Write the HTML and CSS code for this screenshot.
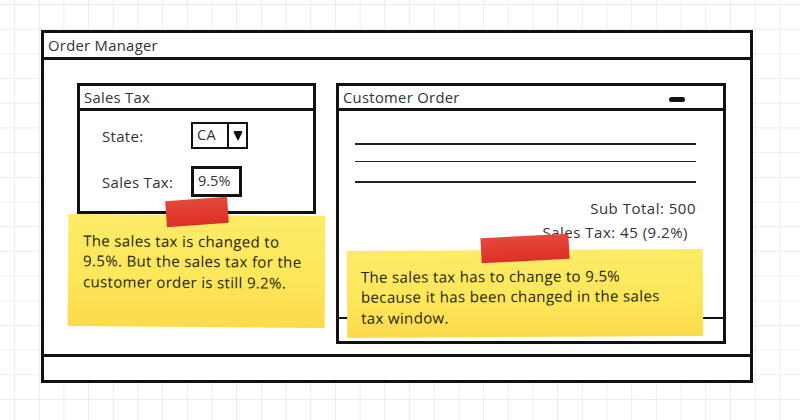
FILE: index.html
```html
<!DOCTYPE html>
<html>
<head>
<meta charset="utf-8">
<link rel="stylesheet" href="styles.css">
</head>
<body>
<div class="canvas">
  <div class="window">
    <div class="win-title">Order Manager</div>
    <div class="win-content">
      <div class="panel sales">
        <div class="panel-head">Sales Tax</div>
        <div class="sales-body">
          <div class="field-label">State:</div>
          <div class="select"><span class="select-val">CA</span><span class="select-btn"><span class="tri"></span></span></div>
          <div class="field-label">Sales Tax:</div>
          <div class="input"><span>9.5%</span></div>
        </div>
      </div>
      <div class="panel order">
        <div class="panel-head"><span>Customer Order</span><span class="minimize"></span></div>
        <div class="order-body">
          <div class="rules">
            <div class="rule"></div>
            <div class="rule r2"></div>
            <div class="rule r3"></div>
          </div>
          <div class="totals">
            <div class="tot">Sub Total: 500</div>
            <div class="tot tax">Sales Tax: 45 (9.2%)</div>
            <div class="tot">Total: 545</div>
          </div>
        </div>
        <div class="order-foot"></div>
      </div>
    </div>
    <div class="win-status"></div>
  </div>

  <div class="sticky note1">The sales tax is changed to 9.5%. But the sales tax for the customer order is still 9.2%.</div>
  <div class="tape tape1"></div>

  <div class="sticky note2">The sales tax has to change to 9.5% because it has been changed in the sales tax window.</div>
  <div class="tape tape2"></div>
</div>
</body>
</html>
```

FILE: styles.css
```css
html, body {
  margin: 0;
  padding: 0;
}
body {
  width: 800px;
  height: 420px;
  overflow: hidden;
  background-color: #ffffff;
  background-image:
    linear-gradient(#ececec 1px, transparent 1px),
    linear-gradient(90deg, #ececec 1px, transparent 1px);
  background-size: 24.7px 24.7px;
  background-position: 14px 4px;
  font-family: "Open Sans", "Liberation Sans", sans-serif;
  color: #333;
  letter-spacing: 0.3px;
}
.canvas {
  position: relative;
  width: 800px;
  height: 420px;
  padding: 30px 0 0 41px;
  box-sizing: border-box;
}
.window {
  width: 712px;
  height: 353px;
  box-sizing: border-box;
  border: 3px solid #111;
  background: #fff;
  display: flex;
  flex-direction: column;
}
.win-title {
  height: 24px;
  border-bottom: 3px solid #111;
  font-size: 14.8px;
  line-height: 24px;
  padding-left: 4px;
  color: #333;
}
.win-content {
  flex: 1;
  display: flex;
  align-items: flex-start;
  gap: 20px;
  padding: 23px 0 0 33px;
}
.win-status {
  height: 23px;
  border-top: 3px solid #111;
}
.panel {
  box-sizing: border-box;
  border: 3px solid #111;
  background: #fff;
  display: flex;
  flex-direction: column;
}
.panel-head {
  height: 22px;
  border-bottom: 3px solid #111;
  font-size: 14.8px;
  line-height: 22px;
  padding-left: 4px;
  display: flex;
  align-items: center;
  justify-content: space-between;
}
.sales {
  width: 239px;
  height: 131px;
}
.sales-body {
  display: grid;
  grid-template-columns: 89px max-content;
  row-gap: 17px;
  align-items: center;
  padding: 11px 0 0 22px;
}
.field-label {
  font-size: 15px;
  color: #333;
}
.select {
  width: 57px;
  height: 27px;
  box-sizing: border-box;
  border: 2.5px solid #111;
  display: flex;
}
.select-val {
  width: 34px;
  font-size: 14.5px;
  line-height: 21px;
  padding-left: 4px;
  box-sizing: border-box;
}
.select-btn {
  flex: 1;
  border-left: 2.5px solid #111;
  display: flex;
  align-items: center;
  justify-content: center;
}
.tri {
  width: 0;
  height: 0;
  border-left: 5.5px solid transparent;
  border-right: 5.5px solid transparent;
  border-top: 10px solid #111;
  border-radius: 2px;
}
.input {
  width: 51px;
  height: 31px;
  box-sizing: border-box;
  border: 3px solid #111;
  font-size: 14.5px;
  line-height: 24px;
  padding-left: 4px;
  letter-spacing: 0;
}
.order {
  width: 390px;
  height: 261px;
}
.minimize {
  width: 16px;
  height: 5px;
  background: #111;
  border-radius: 3px;
  margin: 4px 38px 0 0;
}
.order-body {
  flex: 1;
  display: flex;
  flex-direction: column;
}
.rules {
  padding: 32px 27px 0 16px;
}
.rule {
  height: 1.5px;
  background: #222;
}
.rule.r2 {
  margin-top: 16px;
}
.rule.r3 {
  margin-top: 19px;
}
.totals {
  padding: 13px 27px 0 0;
  text-align: right;
  font-size: 15px;
  line-height: 24.5px;
  color: #333;
  letter-spacing: 0.5px;
}
.tot.tax {
  margin-right: 8px;
}
.order-foot {
  height: 22px;
  border-top: 2.5px solid #111;
}
.sticky {
  position: absolute;
  box-sizing: border-box;
  font-size: 15px;
  line-height: 20.3px;
  letter-spacing: 0.35px;
  color: #26241a;
  background: linear-gradient(180deg, #fdeb67 0%, #fde75a 55%, #fbdb4b 100%);
}
.note1 {
  left: 68px;
  top: 215px;
  width: 257px;
  height: 112px;
  padding: 16px 8px 0 15px;
  transform: rotate(0.4deg);
}
.note2 {
  left: 347px;
  top: 250px;
  width: 356px;
  height: 87px;
  padding: 16px 27px 0 14px;
  transform: rotate(-0.3deg);
}
.tape {
  position: absolute;
  background: linear-gradient(180deg, #e34a3c 0%, #e1382e 60%, #d9312a 100%);
}
.tape1 {
  left: 166px;
  top: 199px;
  width: 62px;
  height: 26px;
  transform: rotate(-4deg);
}
.tape2 {
  left: 481px;
  top: 236px;
  width: 88px;
  height: 25px;
  transform: rotate(-3deg);
}
```
